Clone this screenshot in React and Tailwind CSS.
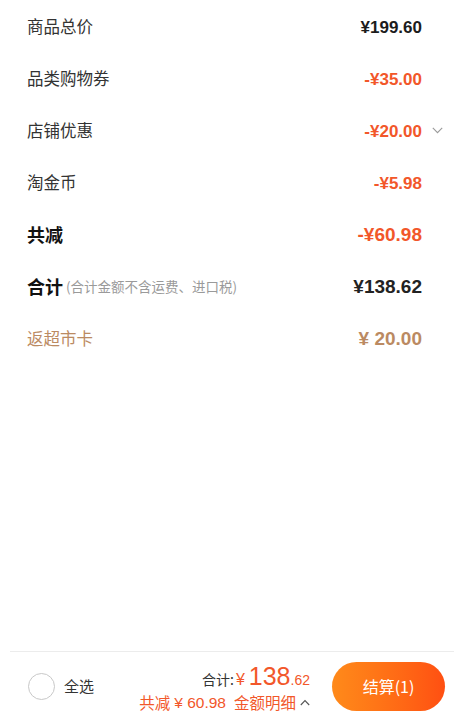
import React from "react";

const cjk = { fontFamily: '"Noto Sans CJK SC", "Noto Sans", sans-serif' };
const num = { fontFamily: '"Liberation Sans", Arial, "Noto Sans CJK SC", sans-serif' };

function Row({ label, value, labelCls, valueCls, extra, chevron }) {
  return (
    <div className="flex h-[52px] items-center pl-[27px] pr-[32px]">
      <div className="flex flex-1 items-center" style={cjk}>
        <span className={labelCls}>{label}</span>
        {extra}
      </div>
      <span className={"pt-[3px] " + valueCls} style={num}>{value}</span>
      <span className="relative w-0">
        {chevron && (
          <svg className="absolute left-[10px] top-[-3px]" width="11" height="7" viewBox="0 0 11 7" fill="none">
            <path d="M0.8 0.8 L5.5 5.6 L10.2 0.8" stroke="#9a9a9a" strokeWidth="1.1" />
          </svg>
        )}
      </span>
    </div>
  );
}

export default function App() {
  const lab = "text-[16.5px] text-[#333333]";
  return (
    <div className="relative flex h-[720px] w-[454px] flex-col overflow-hidden bg-white">
      <div className="flex-1">
        <Row label="商品总价" value="¥199.60" labelCls={lab} valueCls="text-[17px] font-bold text-[#1c1c1c]" />
        <Row label="品类购物券" value="-¥35.00" labelCls={lab} valueCls="text-[17px] font-bold text-[#f2572a]" />
        <Row label="店铺优惠" value="-¥20.00" labelCls={lab} valueCls="text-[17px] font-bold text-[#f2572a]" chevron />
        <Row label="淘金币" value="-¥5.98" labelCls={lab} valueCls="text-[17px] font-bold text-[#f2572a]" />
        <Row label="共减" value="-¥60.98" labelCls="text-[18px] font-bold text-[#111111]" valueCls="text-[19px] font-bold text-[#f2572a]" />
        <Row
          label="合计"
          value="¥138.62"
          labelCls="text-[18px] font-bold text-[#111111]"
          valueCls="text-[19px] font-bold text-[#222222]"
          extra={<span className="ml-[3px] mt-[1px] text-[13.5px] text-[#9a9a9a]">(合计金额不含运费、进口税)</span>}
        />
        <Row label="返超市卡" value="¥ 20.00" labelCls="text-[16.5px] text-[#bb8a62]" valueCls="text-[19px] font-bold text-[#bb8a62]" />
      </div>

      <div className="ml-[10px] h-[69px] border-t border-[#ececec]">
        <div className="-ml-[10px] flex h-full items-center">
          <div className="ml-[28px] h-[27px] w-[27px] rounded-full border-[1.5px] border-[#c8c8c8]" />
          <span className="ml-[9px] text-[15px] text-[#333333]" style={cjk}>全选</span>
          <div className="flex flex-1 flex-col items-end pr-[22px] pt-[2px]">
            <div className="flex items-baseline leading-none" style={cjk}>
              <span className="text-[14px] text-[#333333]">合计:</span>
              <span className="ml-[2px] text-[16px] text-[#f2572a]" style={num}>¥ </span>
              <span className="ml-[4px] text-[25px] text-[#f2572a]" style={num}>138</span>
              <span className="text-[14px] text-[#f2572a]" style={num}>.62</span>
            </div>
            <div className="mt-[6px] flex items-center leading-none text-[15.5px] text-[#f2572a]" style={cjk}>
              <span>共减</span>
              <span className="ml-[4px]" style={num}>¥ 60.98</span>
              <span className="ml-[8px]">金额明细</span>
              <svg className="ml-[4px]" width="10" height="7" viewBox="0 0 10 7" fill="none">
                <path d="M0.8 6 L5 1.5 L9.2 6" stroke="#555" strokeWidth="1.1" />
              </svg>
            </div>
          </div>
          <div
            className="mr-[9px] flex h-[49px] w-[113px] items-center justify-center rounded-full bg-gradient-to-r from-[#ff8a1a] to-[#ff4f12] text-[16px] text-white"
            style={cjk}
          >
            结算(1)
          </div>
        </div>
      </div>
    </div>
  );
}
